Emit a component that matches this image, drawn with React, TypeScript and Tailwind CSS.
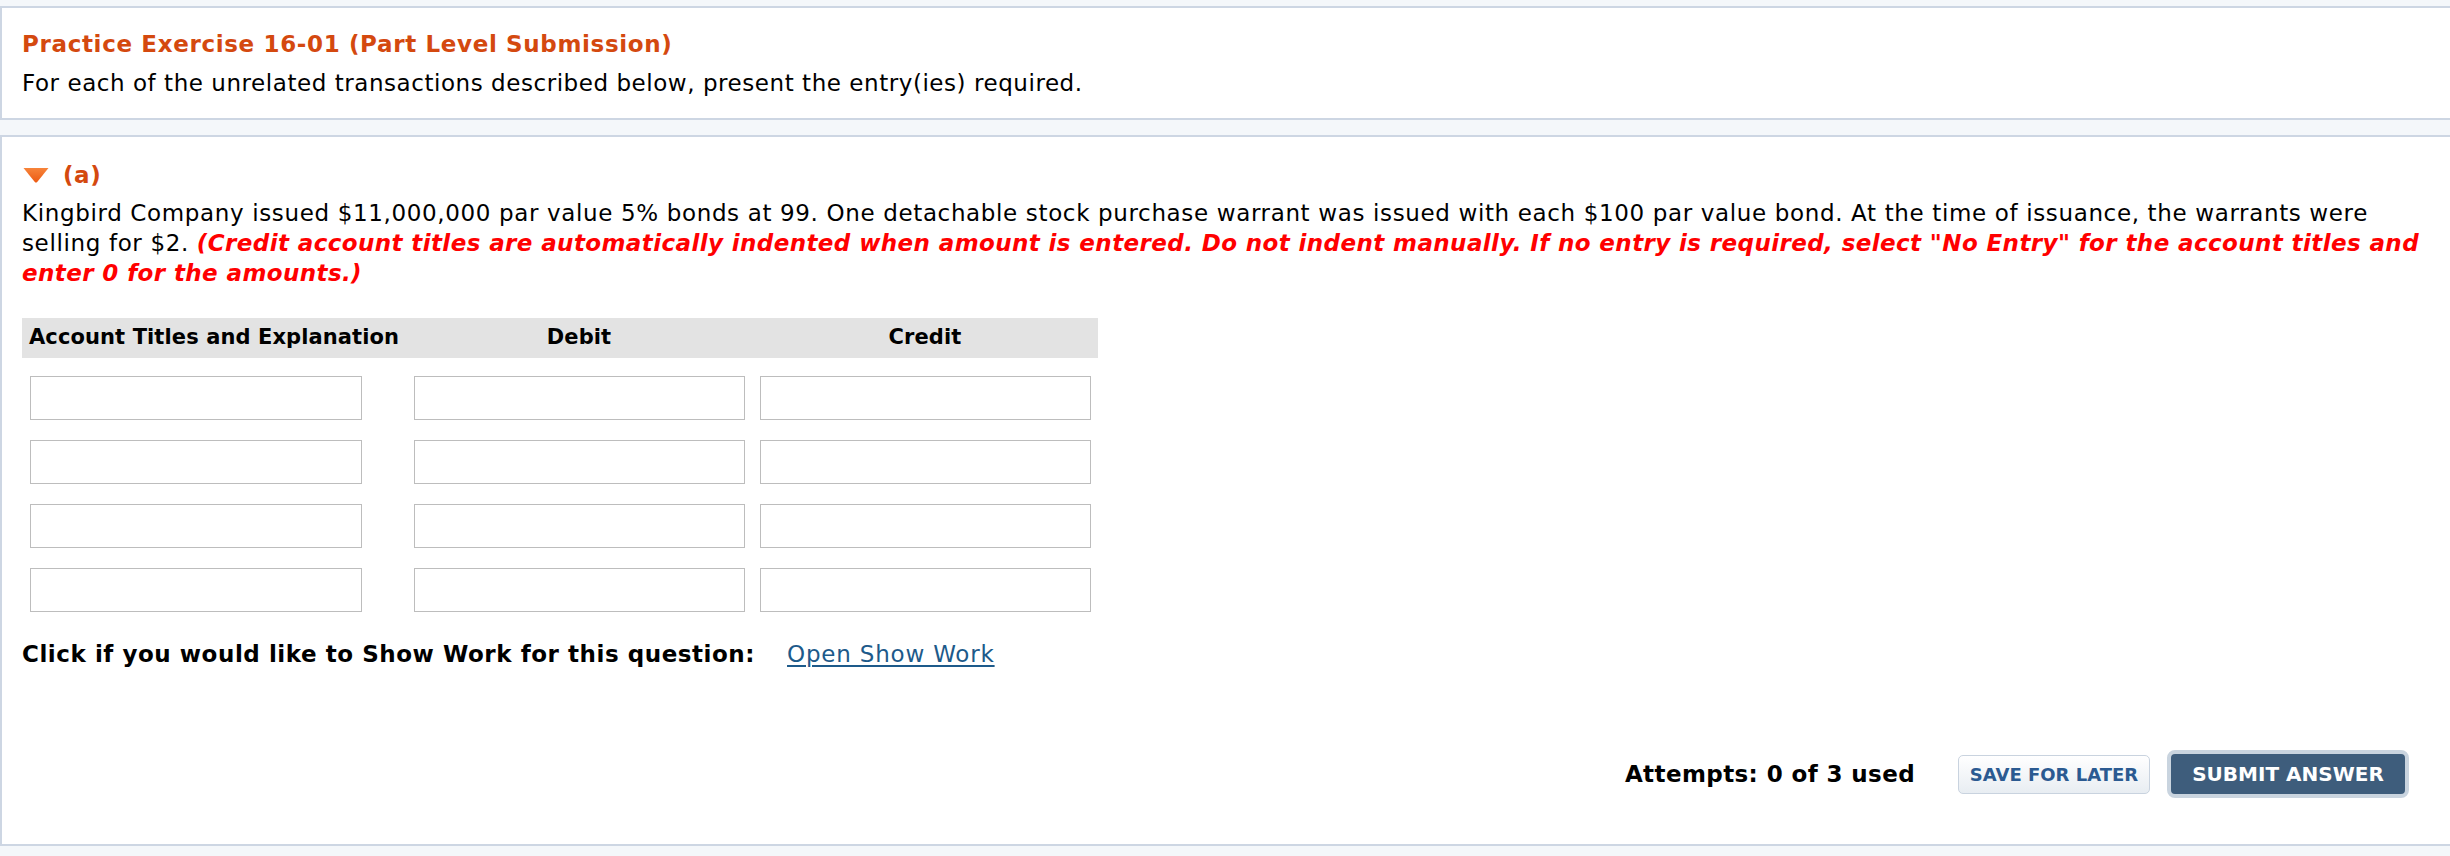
import React from 'react'

function Triangle() {
  return (
    <svg width="28" height="16" viewBox="0 0 28 16" className="shrink-0">
      <defs>
        <linearGradient id="tri" x1="0" y1="0" x2="0" y2="1">
          <stop offset="0" stopColor="#f7843a" />
          <stop offset="1" stopColor="#ec5a12" />
        </linearGradient>
      </defs>
      <path d="M1.5 1 L26.5 1 L15.2 15 Q14 16.2 12.8 15 Z" fill="url(#tri)" />
    </svg>
  )
}

const rows = [0, 1, 2, 3]

export default function App() {
  return (
    <div
      className="min-h-[856px] bg-[#f4f7fa] pt-[6px] text-black"
      style={{ fontFamily: '"DejaVu Sans", Verdana, sans-serif' }}
    >
      {/* Intro panel */}
      <section className="bg-white border-y-2 border-l-2 border-[#cdd6e3] pl-[20px] pr-[20px] pt-[21px] pb-[20px]">
        <h1 className="text-[23px] leading-[30px] font-bold tracking-[0.65px] text-[#d4490f] mb-[9px]">
          Practice Exercise 16-01 (Part Level Submission)
        </h1>
        <p className="text-[23px] leading-[30px] tracking-[0.55px]">
          For each of the unrelated transactions described below, present the entry(ies) required.
        </p>
      </section>

      {/* Part (a) */}
      <section className="mt-[15px] bg-white border-y-2 border-l-2 border-[#cdd6e3] pl-[20px] pr-[16px] pt-[23px] pb-[46px]">
        <div className="flex items-center gap-[13px] h-[30px]">
          <Triangle />
          <span className="text-[23px] leading-[30px] font-bold tracking-[0.6px] text-[#d4490f]">(a)</span>
        </div>

        <p className="mt-[8px] text-[23px] leading-[30px] tracking-[0.64px]">
          Kingbird Company issued $11,000,000 par value 5% bonds at 99. One detachable stock purchase warrant was issued with each $100 par value bond. At the time of issuance, the warrants were selling for $2.{' '}
          <span className="font-bold italic tracking-[0.4px] text-[#ff0000]">
            (Credit account titles are automatically indented when amount is entered. Do not indent manually. If no entry is required, select "No Entry" for the account titles and enter 0 for the amounts.)
          </span>
        </p>

        {/* Journal table */}
        <div className="mt-[30px] w-[1076px]">
          <div className="grid grid-cols-[378px_358px_340px] h-[40px] items-center bg-[#e3e3e3] text-[21px] font-bold tracking-[0.1px]">
            <div className="pl-[7px]">Account Titles and Explanation</div>
            <div className="text-center">Debit</div>
            <div className="text-center pr-[6px]">Credit</div>
          </div>
          <div className="mt-[18px] flex flex-col gap-[20px]">
            {rows.map((r) => (
              <div key={r} className="grid grid-cols-[378px_358px_340px]">
                <div className="pl-[8px]">
                  <input type="text" className="w-[332px] h-[44px] border border-[#bdbdbd] bg-white outline-none" />
                </div>
                <div className="pl-[14px]">
                  <input type="text" className="w-[331px] h-[44px] border border-[#bdbdbd] bg-white outline-none" />
                </div>
                <div className="pl-[2px]">
                  <input type="text" className="w-[331px] h-[44px] border border-[#bdbdbd] bg-white outline-none" />
                </div>
              </div>
            ))}
          </div>
        </div>

        <div className="mt-[27px] flex items-center text-[23px] leading-[30px]">
          <span className="font-bold tracking-[0.55px]">Click if you would like to Show Work for this question:</span>
          <a href="#" className="ml-[32px] tracking-[0.8px] text-[#1d5a8a] underline underline-offset-[3px]">
            Open Show Work
          </a>
        </div>

        <div className="mt-[81px] flex items-center justify-end pr-[25px]">
          <span className="text-[23px] leading-[30px] font-bold tracking-[0.4px]">Attempts: 0 of 3 used</span>
          <button className="ml-[43px] w-[192px] h-[39px] rounded-[5px] border border-[#c9d3df] bg-gradient-to-b from-white to-[#e8edf2] text-[18px] font-bold text-[#2b5a91]">
            SAVE FOR LATER
          </button>
          <button className="ml-[17px] w-[242px] h-[48px] rounded-[8px] border-[4px] border-[#c9d4df] bg-[#3e5d7c] text-[20px] font-bold text-white">
            SUBMIT ANSWER
          </button>
        </div>
      </section>
    </div>
  )
}
